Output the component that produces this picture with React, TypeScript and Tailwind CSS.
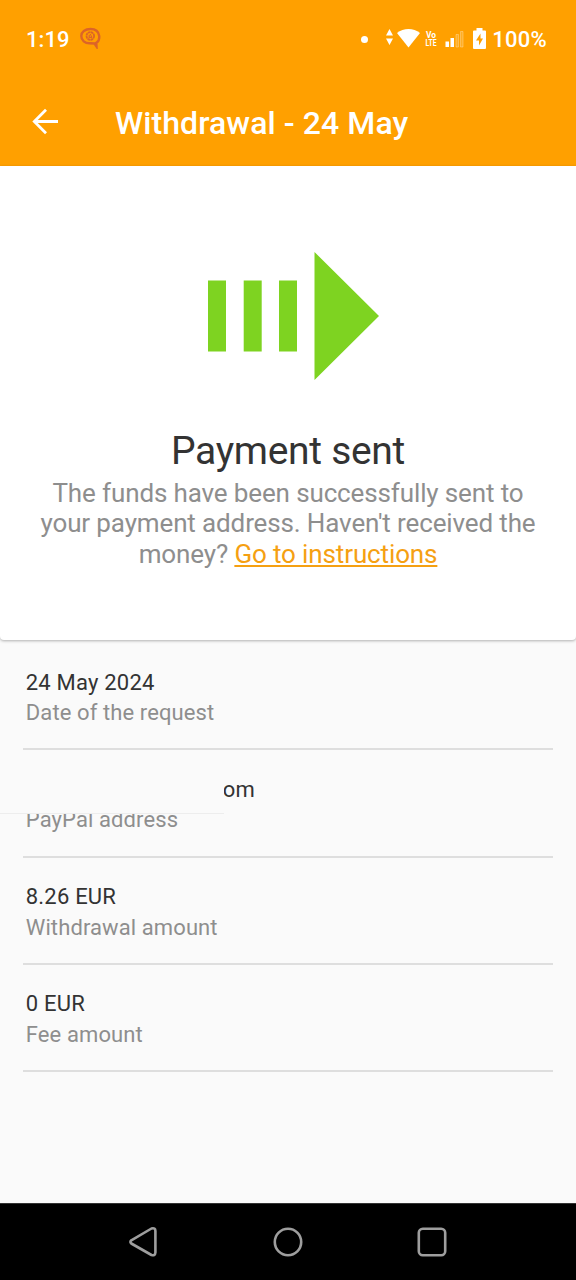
import { ReactNode } from "react";

function StatusBar() {
  return (
    <div className="h-[78px] flex items-center pl-[26px] pr-[29px] text-white text-[22px] font-medium leading-none">
      <span className="w-[54px] mt-[2px] tracking-[0.1px]">1:19</span>
      <svg width="22" height="22" viewBox="0 0 22 22" className="-mt-0.5" fill="none" stroke="#dc6428">
        <path d="M14.500 16.500 16.500 19.500 16.300 15.800C18.600 14.500 19.500 12 19.200 9 18.500 4 15 2 10.500 2 5 2 1.300 5 1.300 9 1.300 13.500 5 16.300 9.500 16.300Z" strokeWidth="2.400" />
        <circle cx="10.300" cy="9" r="3.800" strokeWidth="1.800" strokeDasharray="2.600 .4" />
        <path d="M9.200 7.800v2.500h2.300V8.500M10.500 7v1.500" strokeWidth="1.200" />
      </svg>

      <div className="ml-auto flex items-center">
        <span className="size-[7px] rounded-full bg-white mr-[17px]" />
        <svg width="36" height="22" viewBox="0 0 36 22" fill="#fff" className="-mt-[2px]">
          <path d="M4.500 2 8 8.500H1ZM1 11.500h7L4.500 18Z" />
          <path d="M12 6C18.500.5 28.500.5 35 6L23.500 20.500Z" />
        </svg>
        <svg width="16" height="22" viewBox="-2 -2 16 22" fill="#fff" className="ml-[2px] mr-[6px] overflow-visible text-[9px] font-bold">
          <text x="1" y="8" textLength="10" lengthAdjust="spacingAndGlyphs">Vo</text>
          <text x="0.500" y="15.500" textLength="11" lengthAdjust="spacingAndGlyphs">LTE</text>
        </svg>
        <svg width="19" height="18" viewBox="0 0 19 18" fill="#fff" className="mr-[9px]">
          <path d="M.5 11.500h3.500v5.500H.5ZM5.500 8h3.500v9h-3.500Z" />
          <path d="M11 4.500h2.500V17H11ZM15.500 1.500h2.500V17h-2.500Z" fillOpacity=".15" stroke="#fff" strokeOpacity=".35" strokeWidth=".8" />
        </svg>
        <svg width="13" height="22" viewBox="0 0 13 22" className="mr-[6px]">
          <path d="M3.500 0h6v2.500H12q1 0 1 1V20q0 1-1 1H1q-1 0-1-1V3.500q0-1 1-1h2.500Z" fill="#fff" />
          <path d="M7.500 5.500 3 12.500h3v5l4-7H7.500Z" fill="#ffa000" />
        </svg>
        <span className="mt-[2px] tracking-[0.25px]">100%</span>
      </div>
    </div>
  );
}

function AppBar() {
  return (
    <div className="h-[88px] flex items-center pl-[32px]">
      <svg width="27" height="27" viewBox="0 0 27 27" fill="none" stroke="#fff" strokeWidth="2.800" className="-mt-[2px]">
        <path d="M26 13.500H2.500M14 1.800 2.300 13.500 14 25.200" />
      </svg>
      <h1 className="ml-[56px] mt-[2px] text-white text-[32px] font-medium leading-none tracking-[0.08px]">
        Withdrawal - 24 May
      </h1>
    </div>
  );
}

type DetailRowProps = {
  label: string;
  children: ReactNode;
};

function DetailRow({ label, children }: DetailRowProps) {
  return (
    <div className="relative h-[107.250px] pl-[2.800px] pt-[24.500px] border-b-2 border-[#dedede] text-[22px] leading-[30.500px] tracking-[0.1px]">
      <div className="text-[#333] tracking-[0.2px]">{children}</div>
      <div className="text-[#8e8e8e]">{label}</div>
    </div>
  );
}

export default function App() {
  return (
    <div className="w-[576px] h-[1280px] overflow-hidden flex flex-col bg-[#fafafa] font-[Roboto,sans-serif]">
      <header className="h-[166px] shrink-0 bg-[#ffa000]">
        <StatusBar />
        <AppBar />
      </header>

      <section className="h-[474px] shrink-0 bg-white rounded-b-[4px] shadow-[0_1px_3px_rgba(0,0,0,0.3)] flex flex-col items-center text-center">
        <svg width="172" height="128" viewBox="0 0 172 128" fill="#7ed321" className="mt-[86px] ml-[11px] shrink-0">
          <path d="M0 28.500h18v71H0ZM35.700 28.500h18v71h-18ZM71 28.500h18v71H71ZM106.500 0 171 64 106.500 128Z" />
        </svg>
        <h2 className="mt-[48px] text-[39px] leading-[46px] tracking-[-0.3px] text-[#333]">Payment sent</h2>
        <p className="mt-[3.500px] text-[26px] leading-[30.500px] tracking-[-0.130px] text-[#8e8e8e] whitespace-nowrap">
          The funds have been successfully sent to
          <br />
          your payment address. Haven't received the
          <br />
          money?{" "}
          <a className="text-[#f5a012] underline decoration-2 underline-offset-[2px]">Go to instructions</a>
        </p>
      </section>

      <main className="flex-1 pt-[3px] pl-[23px] pr-[23px]">
        <DetailRow label="Date of the request">24 May 2024</DetailRow>
        <DetailRow label="PayPal address">
          <span className="ml-[197px]">om</span>
          {/* redacted part of the address */}
          <span className="absolute -left-[23px] top-[12px] w-[224px] h-[52px] bg-[#fafafa] border-b border-[#ededed]" />
        </DetailRow>
        <DetailRow label="Withdrawal amount">8.26 EUR</DetailRow>
        <DetailRow label="Fee amount">0 EUR</DetailRow>
      </main>

      <nav className="h-[77px] shrink-0 bg-black border-t border-[#333] flex items-center justify-center gap-[112px]">
        <svg width="32" height="32" viewBox="0 0 32 32" fill="none" stroke="#9e9e9e" strokeWidth="2.600" strokeLinejoin="round">
          <path d="M3.300 14.300 23.500 2.500Q27.400 1.500 27.400 5V26.500Q27.200 30 23.500 29L3.300 17.500Q1.500 16 3.300 14.300Z" />
        </svg>
        <svg width="32" height="32" viewBox="0 0 32 32" fill="none" stroke="#9e9e9e" strokeWidth="2.600">
          <circle cx="16" cy="16" r="13.200" />
        </svg>
        <svg width="32" height="32" viewBox="0 0 32 32" fill="none" stroke="#9e9e9e" strokeWidth="2.600">
          <rect x="2.800" y="2.800" width="26.400" height="26.400" rx="4" />
        </svg>
      </nav>
    </div>
  );
}
